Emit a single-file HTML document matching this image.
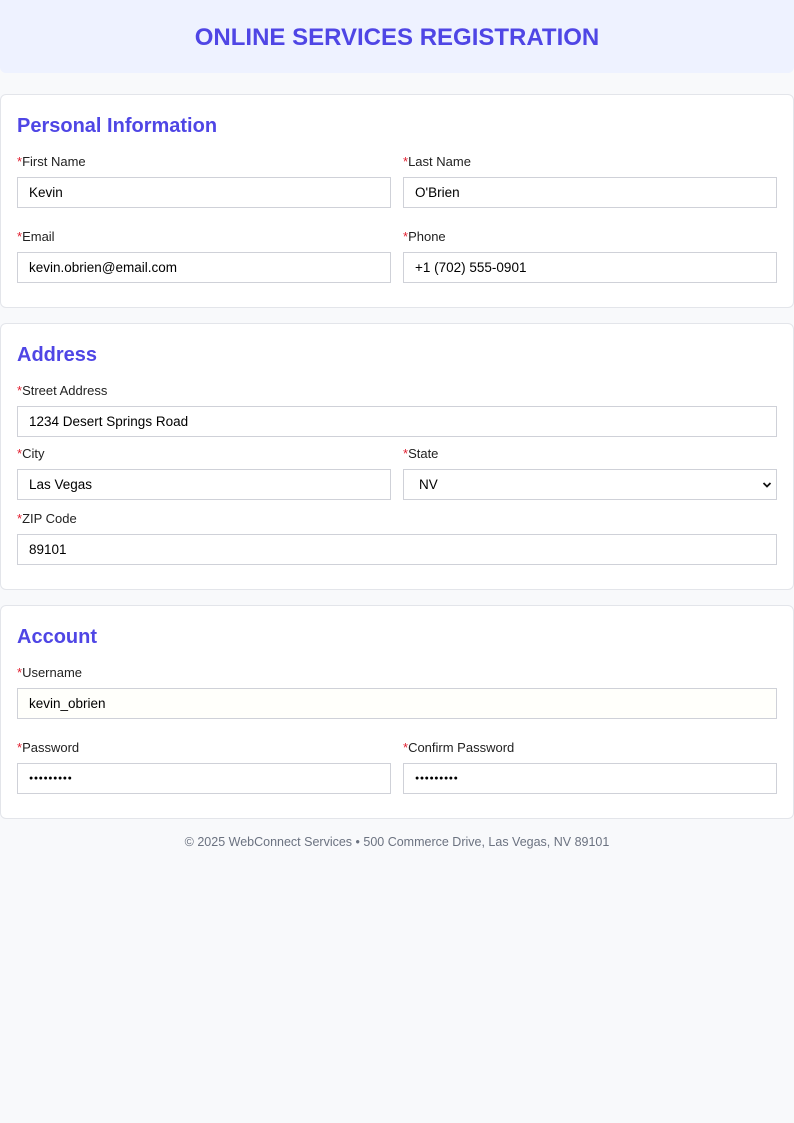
<!DOCTYPE html>
<html><head><style>
*{box-sizing:border-box;margin:0;padding:0}
body{width:794px;height:1123px;background:#f8f9fb;font-family:"Liberation Sans",Arial,sans-serif;position:relative;overflow:hidden}
.hdr{position:absolute;left:0;top:0;width:794px;height:73px;background:#eef2ff;border-radius:0 0 6px 6px;text-align:center;line-height:75px;color:#4f46e5;font-weight:bold;font-size:24px}
.card{position:absolute;left:0;width:794px;background:#fff;border:1px solid #e3e5ea;border-radius:6px}
.t{position:absolute;left:17px;color:#4f46e5;font-weight:bold;font-size:20px;line-height:24px}
.l{position:absolute;font-size:13px;color:#222;line-height:16px}
.l b{color:#e11d2e;font-weight:normal}
.i{position:absolute;height:31px;border:1px solid #cfd1d8;background:#fff;font-size:13.5px;line-height:29px;padding-left:11px;color:#000}
.f{position:absolute;top:835px;width:794px;text-align:center;font-size:12.5px;color:#6b7280}
.pw{font-size:7px;letter-spacing:0.6px}
</style></head><body>
<div class="hdr">ONLINE SERVICES REGISTRATION</div>

<div class="card" style="top:94px;height:214px"></div>
<div class="t" style="top:114px">Personal Information</div>
<div class="l" style="left:17px;top:154px"><b>*</b>First Name</div>
<div class="l" style="left:403px;top:154px"><b>*</b>Last Name</div>
<div class="i" style="left:17px;top:177px;width:374px">Kevin</div>
<div class="i" style="left:403px;top:177px;width:374px">O'Brien</div>
<div class="l" style="left:17px;top:229px"><b>*</b>Email</div>
<div class="l" style="left:403px;top:229px"><b>*</b>Phone</div>
<div class="i" style="left:17px;top:252px;width:374px">kevin.obrien@email.com</div>
<div class="i" style="left:403px;top:252px;width:374px">+1 (702) 555-0901</div>

<div class="card" style="top:323px;height:267px"></div>
<div class="t" style="top:343px">Address</div>
<div class="l" style="left:17px;top:383px"><b>*</b>Street Address</div>
<div class="i" style="left:17px;top:406px;width:760px">1234 Desert Springs Road</div>
<div class="l" style="left:17px;top:446px"><b>*</b>City</div>
<div class="l" style="left:403px;top:446px"><b>*</b>State</div>
<div class="i" style="left:17px;top:469px;width:374px">Las Vegas</div>
<div class="i" style="left:403px;top:469px;width:374px;padding-left:15px">NV<svg style="position:absolute;right:4px;top:11px" width="10" height="8" viewBox="0 0 10 8"><path d="M1.5 2 L5 5.5 L8.5 2" stroke="#111" stroke-width="1.8" fill="none"/></svg></div>
<div class="l" style="left:17px;top:511px"><b>*</b>ZIP Code</div>
<div class="i" style="left:17px;top:534px;width:760px">89101</div>

<div class="card" style="top:605px;height:214px"></div>
<div class="t" style="top:625px">Account</div>
<div class="l" style="left:17px;top:665px"><b>*</b>Username</div>
<div class="i" style="left:17px;top:688px;width:760px;background:#fffffb">kevin_obrien</div>
<div class="l" style="left:17px;top:740px"><b>*</b>Password</div>
<div class="l" style="left:403px;top:740px"><b>*</b>Confirm Password</div>
<div class="i pw" style="left:17px;top:763px;width:374px">●●●●●●●●●</div>
<div class="i pw" style="left:403px;top:763px;width:374px">●●●●●●●●●</div>

<div class="f">© 2025 WebConnect Services • 500 Commerce Drive, Las Vegas, NV 89101</div>
</body></html>
